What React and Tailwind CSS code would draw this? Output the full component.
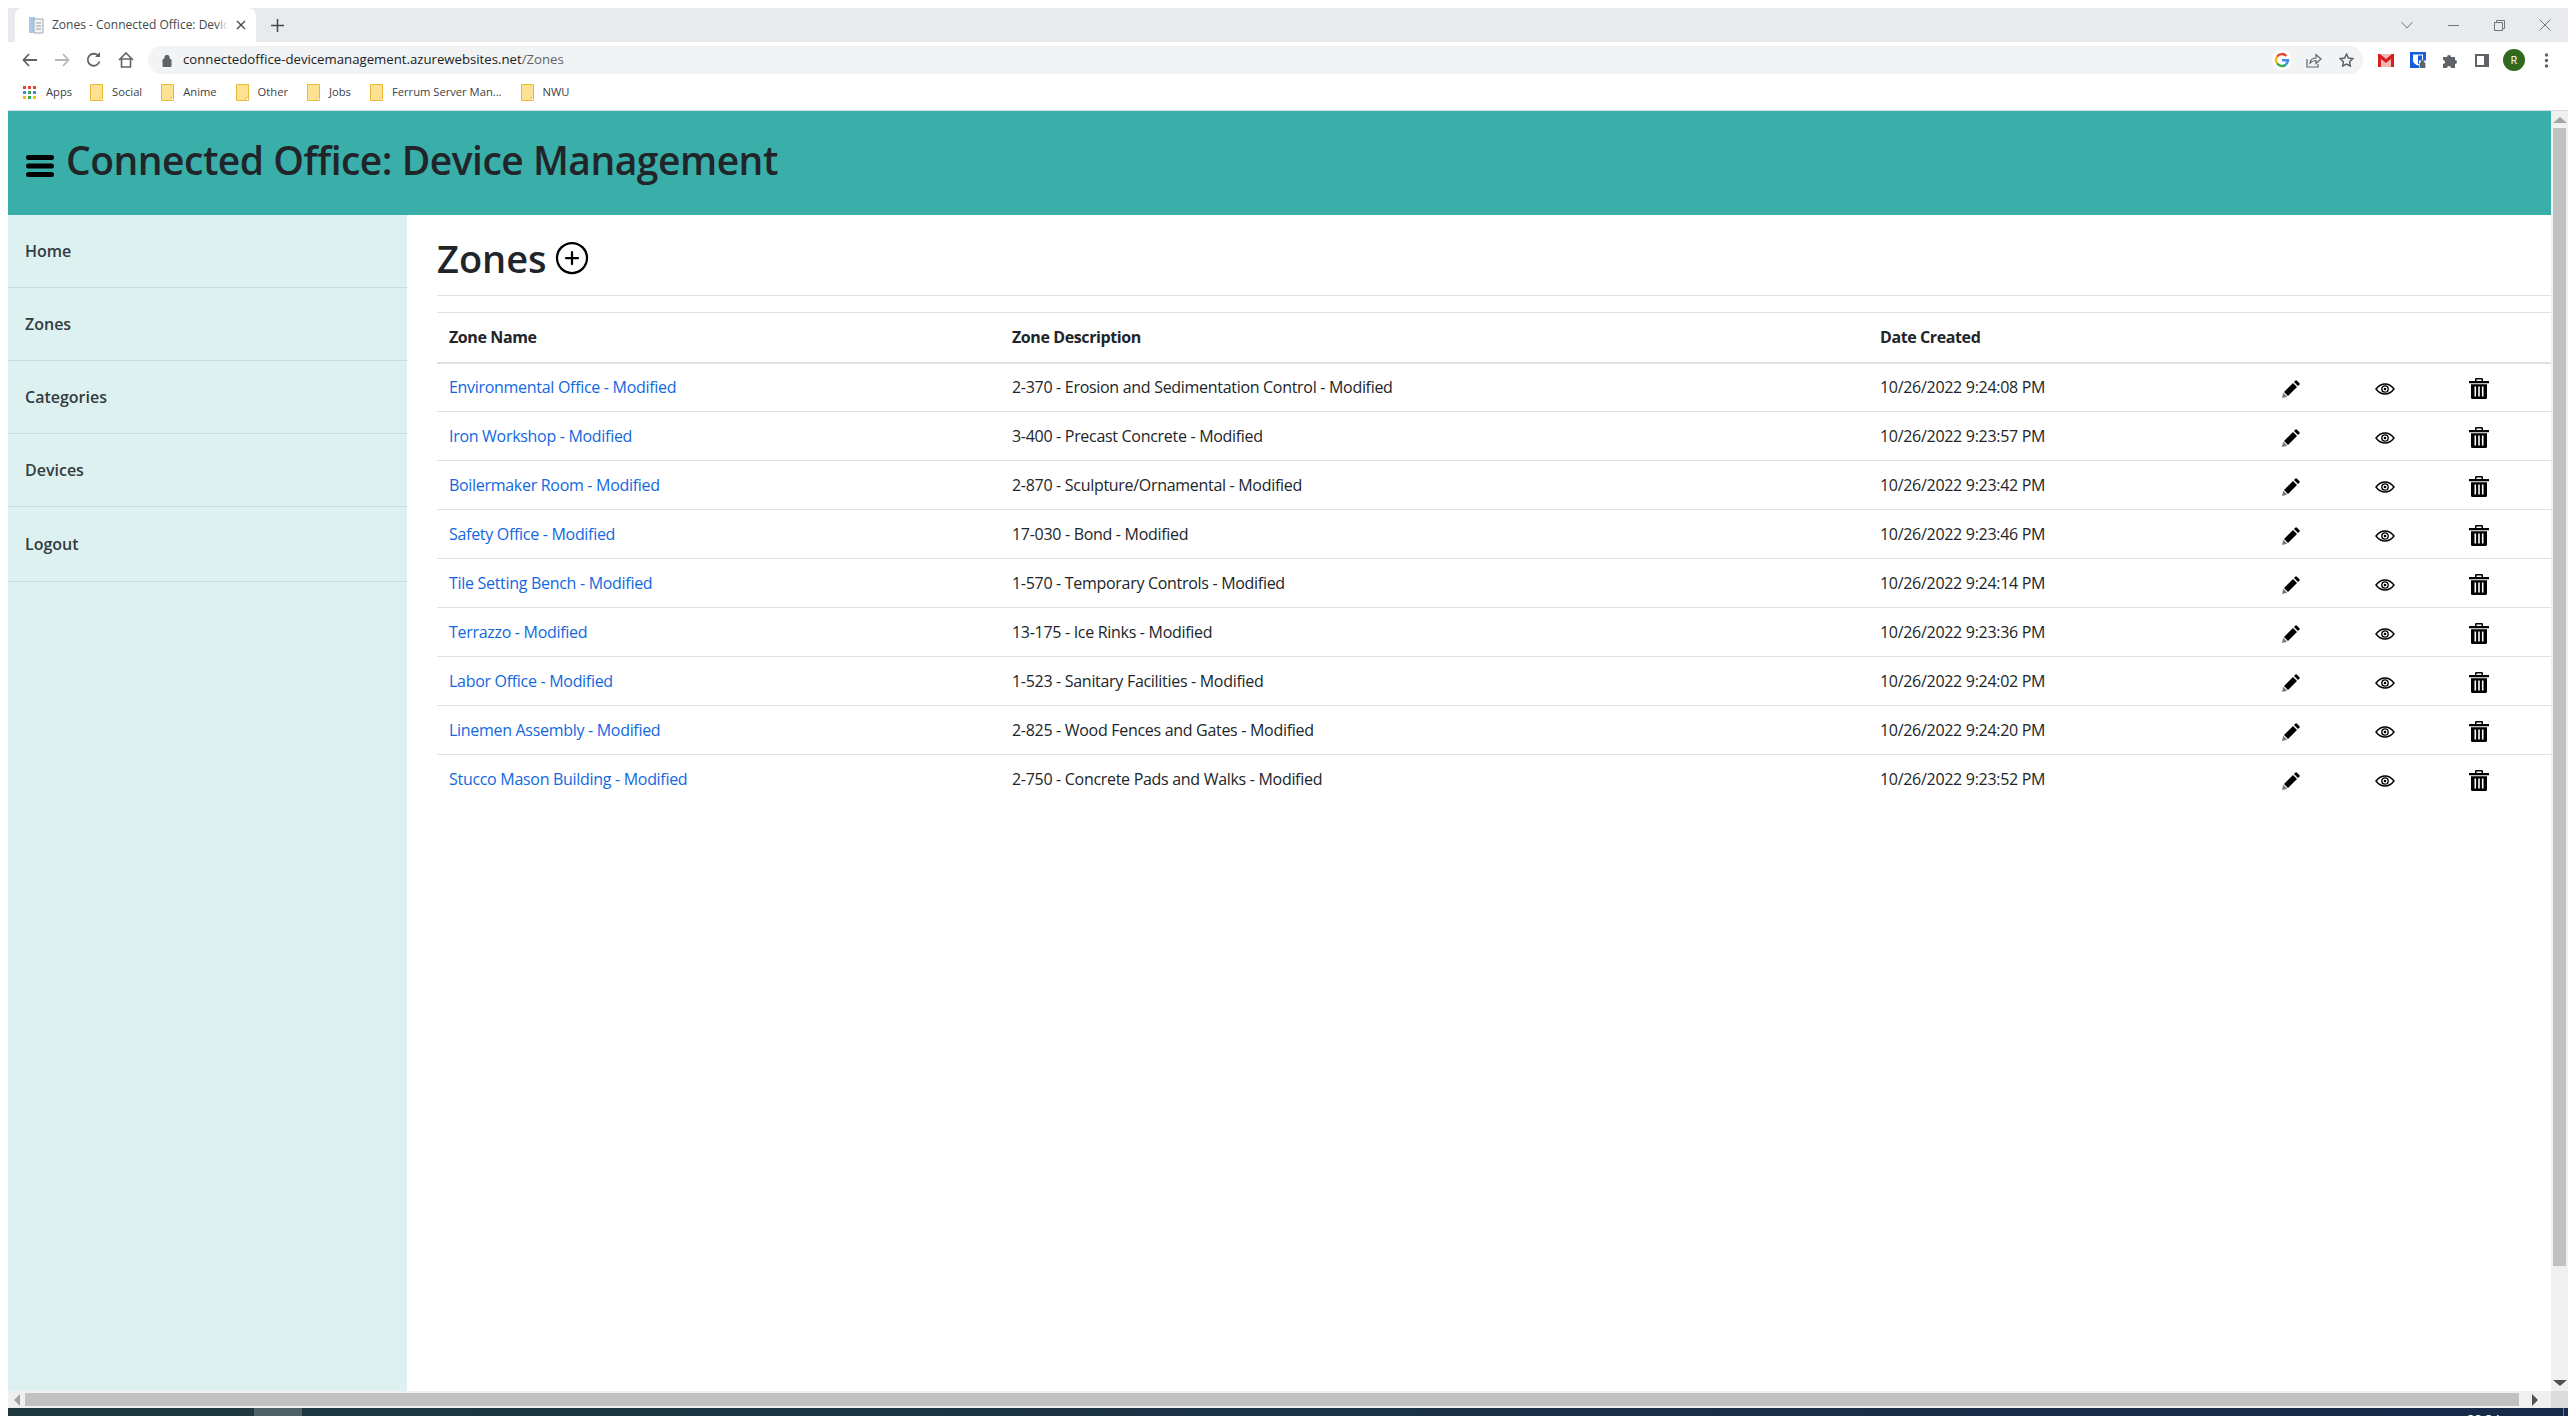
import { FiPlusCircle } from "react-icons/fi";

const zones = [
  ["Environmental Office - Modified", "2-370 - Erosion and Sedimentation Control - Modified", "10/26/2022 9:24:08 PM"],
  ["Iron Workshop - Modified", "3-400 - Precast Concrete - Modified", "10/26/2022 9:23:57 PM"],
  ["Boilermaker Room - Modified", "2-870 - Sculpture/Ornamental - Modified", "10/26/2022 9:23:42 PM"],
  ["Safety Office - Modified", "17-030 - Bond - Modified", "10/26/2022 9:23:46 PM"],
  ["Tile Setting Bench - Modified", "1-570 - Temporary Controls - Modified", "10/26/2022 9:24:14 PM"],
  ["Terrazzo - Modified", "13-175 - Ice Rinks - Modified", "10/26/2022 9:23:36 PM"],
  ["Labor Office - Modified", "1-523 - Sanitary Facilities - Modified", "10/26/2022 9:24:02 PM"],
  ["Linemen Assembly - Modified", "2-825 - Wood Fences and Gates - Modified", "10/26/2022 9:24:20 PM"],
  ["Stucco Mason Building - Modified", "2-750 - Concrete Pads and Walks - Modified", "10/26/2022 9:23:52 PM"],
];

const navItems = ["Home", "Zones", "Categories", "Devices", "Logout"];
const bookmarks = ["Social", "Anime", "Other", "Jobs", "Ferrum Server Man...", "NWU"];

const Folder = () => (
  <svg width="13" height="17" viewBox="0 0 13 17" className="shrink-0">
    <path d="M.5.5h12v16H.5z" fill="#fde293" stroke="#eab93a" />
    <path d="M10 13.500h2.500v3H10z" fill="#fff" stroke="#eab93a" strokeWidth=".8" />
  </svg>
);

const PencilIcon = () => (
  <svg width="18" height="18" viewBox="0 0 18 18">
    <path d="M0 18l1.200-5.200 4 4z" fill="#777" />
    <path d="M2 12l9-9 4 4-9 9z" fill="#000" />
    <path d="M12 2l1.500-1.500q.6-.5 1.200 0l2.800 2.800q.5.7 0 1.200L16 6z" fill="#000" />
  </svg>
);

const EyeIcon = () => (
  <svg width="20" height="12" viewBox="0 0 20 12" fill="none" stroke="#000">
    <path d="M1 6c2.500-3.300 5.500-5 9-5s6.500 1.700 9 5c-2.500 3.300-5.500 5-9 5s-6.500-1.700-9-5z" strokeWidth="1.400" />
    <circle cx="10" cy="6" r="3.200" strokeWidth="1.300" />
    <circle cx="10" cy="6" r="1.300" fill="#000" stroke="none" />
  </svg>
);

const TrashIcon = () => (
  <svg width="20" height="21" viewBox="0 0 20 21">
    <path d="M6 3V1.200Q6 0 7.200 0h5.600Q14 0 14 1.200V3h6v2.200H0V3zM7.500 3h5V1.500h-5z" fill="#000" fillRule="evenodd" />
    <path d="M2 6.200h16V19.500Q18 21 16.500 21h-13Q2 21 2 19.500z" fill="#000" />
    <path d="M5.500 8.500h1.600v10H5.500zM9.200 8.500h1.600v10H9.200zM12.900 8.500h1.600v10h-1.600z" fill="#fff" />
  </svg>
);

const GoogleIcon = () => (
  <svg width="20" height="20" viewBox="0 0 20 20" fill="none" strokeWidth="2.400">
    <circle cx="10" cy="10" r="10" fill="#fff" />
    <path d="M14.400 6A6 6 0 0 0 5.100 6.600" stroke="#ea4335" />
    <path d="M5.100 6.600a6 6 0 0 0 0 6.800" stroke="#fbbc04" />
    <path d="M5.100 13.400a6 6 0 0 0 8.600 1.300" stroke="#34a853" />
    <path d="M13.700 14.700A6 6 0 0 0 16 10.200H10" stroke="#4285f4" />
  </svg>
);

const ToolCell = ({ children }) => (
  <div className="w-[32px] shrink-0 flex items-center justify-center">{children}</div>
);

const ChromeBar = () => (
  <div className="shrink-0 text-[#3c4043] font-['Open_Sans',sans-serif]">
    {/* tab strip */}
    <div className="h-[34px] bg-[#e8eaed] flex items-end pl-[7px]">
      <div className="w-[241px] h-[34px] bg-white rounded-t-[8px] flex items-center pl-[13px] pr-[10px] gap-[8px]">
        <svg width="16" height="18" viewBox="0 0 16 18" className="shrink-0">
          <path d="M1 1h6v16H1z" fill="#a9c8e8" />
          <path d="M6 3h9v14H6z" fill="#f1f3f4" stroke="#a0a8b0" />
          <path d="M8 7h5M8 10h5M8 13h5" stroke="#9aa0a6" />
        </svg>
        <div className="relative flex-1 overflow-hidden">
          <div className="text-[12px] whitespace-nowrap text-[#45484c]">Zones - Connected Office: Device</div>
          <div className="absolute inset-y-0 right-0 w-[12px] bg-gradient-to-r from-transparent to-white" />
        </div>
        <svg width="10" height="10" viewBox="0 0 10 10" stroke="#45484c" strokeWidth="1.400" className="shrink-0"><path d="M1 1l8 8M9 1l-8 8" /></svg>
      </div>
      <div className="h-[34px] flex items-center pl-[15px]">
        <svg width="13" height="13" viewBox="0 0 13 13" stroke="#45484c" strokeWidth="1.500"><path d="M6.500 0v13M0 6.500h13" /></svg>
      </div>
      <div className="ml-auto h-[34px] flex items-center text-[#70757a]">
        <div className="w-[46px] flex justify-center">
          <svg width="12" height="8" viewBox="0 0 12 8" fill="none" stroke="currentColor"><path d="M.5 1l5.500 6 5.500-6" /></svg>
        </div>
        <div className="w-[46px] flex justify-center">
          <div className="w-[11px] h-px bg-current" />
        </div>
        <div className="w-[46px] flex justify-center">
          <svg width="11" height="11" viewBox="0 0 11 11" fill="none" stroke="currentColor"><path d="M.5 2.500h8v8h-8zM2.500 2.500v-2h8v8h-2" /></svg>
        </div>
        <div className="w-[46px] flex justify-center">
          <svg width="12" height="12" viewBox="0 0 12 12" stroke="currentColor"><path d="M.5.500l11 11M11.500.500l-11 11" /></svg>
        </div>
      </div>
    </div>
    {/* address row */}
    <div className="h-[36px] bg-white flex items-center pl-[14px]">
      <div className="flex items-center gap-[16px] w-[126px] shrink-0 text-[#5f6368]">
        <svg width="16" height="14" viewBox="0 0 16 14" fill="none" stroke="currentColor" strokeWidth="1.800"><path d="M15 7H2M7 1L1.500 7 7 13" /></svg>
        <svg width="16" height="14" viewBox="0 0 16 14" fill="none" stroke="#b4b7bb" strokeWidth="1.800"><path d="M1 7h13M9 1l5.500 6L9 13" /></svg>
        <svg width="16" height="16" viewBox="0 0 16 16" fill="none" stroke="currentColor" strokeWidth="1.800"><path d="M13.500 9.500A6 6 0 1 1 12 3.500" /><path d="M14 0v5H9z" fill="currentColor" stroke="none" /></svg>
        <svg width="16" height="16" viewBox="0 0 16 16" fill="none" stroke="currentColor" strokeWidth="1.600"><path d="M1 8l7-7 7 7M3.500 7v8h9V7z" /></svg>
      </div>
      <div className="w-[2215px] shrink-0 h-[28px] rounded-full bg-[#f1f3f4] flex items-center pl-[14px]">
        <svg width="10" height="13" viewBox="0 0 10 13" className="mr-[11px]"><path d="M1 5.500h8v7H1zM2.800 5.500V3.500a2.200 2.200 0 0 1 4.400 0v2" fill="#5f6368" stroke="#5f6368" /></svg>
        <span className="text-[13.200px] text-[#202124]">connectedoffice-devicemanagement.azurewebsites.net<span className="text-[#5f6368]">/Zones</span></span>
        <div className="ml-auto flex items-center pr-[1px]">
          <ToolCell><GoogleIcon /></ToolCell>
          <ToolCell>
            <svg width="16" height="15" viewBox="0 0 16 15" fill="none" stroke="#5f6368" strokeWidth="1.200"><path d="M1 6v8h11V11M4 10c.5-3.500 3-5 6-5V1.500l5 4.500-5 4.500V7.500C7.500 7.500 5.500 8.500 4 10z" /></svg>
          </ToolCell>
          <ToolCell>
            <svg width="15" height="14" viewBox="0 0 15 14" fill="none" stroke="#5f6368" strokeWidth="1.500"><path d="M7.500 1.200l1.900 3.900 4.300.6-3.100 3 .7 4.300-3.800-2-3.800 2 .7-4.300-3.100-3 4.300-.6z" /></svg>
          </ToolCell>
        </div>
      </div>
      <div className="flex items-center ml-[7px]">
        <ToolCell>
          <svg width="16" height="13" viewBox="0 0 16 13"><path d="M0 0h16v13H0z" fill="#f2b8b5" /><path d="M0 0v13h3V5l5 4 5-4v8h3V0h-2L8 5 2 0z" fill="#d81e1e" /></svg>
        </ToolCell>
        <ToolCell>
          <svg width="16" height="16" viewBox="0 0 16 16"><path d="M0 0h16v16H0z" fill="#175ddc" /><path d="M3 2.500h10v6c0 2.500-2.500 4-5 5-2.500-1-5-2.500-5-5z" fill="#fff" /><path d="M8 3.500h4v5c0 1.500-2 2.800-4 3.700z" fill="#175ddc" /><path d="M9 8.500h7v7.500H9z" fill="#fff" /><path d="M10 11h5v5h-5zM11 11V9.800a1.500 1.500 0 0 1 3 0V11" fill="#5f6368" stroke="#5f6368" strokeWidth=".7" /></svg>
        </ToolCell>
        <ToolCell>
          <svg width="15" height="15" viewBox="0 0 15 15"><path d="M0 4h4a2 2 0 0 1 4 0h4v3a2 2 0 0 1 0 4v4H8a2 2 0 0 0-4 0H0v-4a2 2 0 0 0 0-4z" fill="#5f6368" /></svg>
        </ToolCell>
        <ToolCell>
          <svg width="14" height="13" viewBox="0 0 14 13"><path d="M0 0h14v13H0z" fill="#5f6368" /><path d="M2 2h7v9H2z" fill="#fff" /></svg>
        </ToolCell>
        <ToolCell>
          <div className="w-[22px] h-[22px] rounded-full bg-[#33691e] text-white text-[11px] flex items-center justify-center">R</div>
        </ToolCell>
        <ToolCell>
          <svg width="5" height="15" viewBox="0 0 5 15" fill="#5f6368"><circle cx="2.500" cy="2" r="1.700" /><circle cx="2.500" cy="7.500" r="1.700" /><circle cx="2.500" cy="13" r="1.700" /></svg>
        </ToolCell>
      </div>
    </div>
    {/* bookmarks */}
    <div className="h-[33px] pb-[4px] bg-white flex items-center pl-[15px] text-[11.200px] border-b border-[#dadce0]">
      <div className="grid grid-cols-3 gap-[2px] w-[13px] h-[13px] mr-[10px]">
        {["#ea4335", "#ea4335", "#ea4335", "#4285f4", "#34a853", "#4285f4", "#fbbc04", "#34a853", "#fbbc04"].map((c, i) => (
          <span key={i} className="w-[3px] h-[3px]" style={{ backgroundColor: c }} />
        ))}
      </div>
      <span className="mr-[18px]">Apps</span>
      {bookmarks.map((b) => (
        <div key={b} className="flex items-center gap-[9px] mr-[19px]">
          <Folder />
          <span>{b}</span>
        </div>
      ))}
    </div>
  </div>
);

const App = () => {
  return (
    <div className="h-[1416px] w-[2576px] overflow-hidden bg-white flex flex-col font-['Open_Sans',sans-serif] text-[#212529]">
      <div className="h-[8px] shrink-0" />
      <div className="flex-1 min-h-0 flex flex-col pl-[8px] pr-[8px]">
        <ChromeBar />
        <div className="flex-1 min-h-0 flex flex-col">
          <div className="flex-1 min-h-0 flex">
            <div className="flex-1 min-w-0 flex flex-col">
              {/* header */}
              <header className="h-[104px] shrink-0 bg-[#3aaea8] flex items-center pl-[18px]">
                <svg width="28" height="22" viewBox="0 0 28 22" fill="#000" className="mr-[12px] mt-[6px] shrink-0">
                  <rect x="0" y="0" width="28" height="5" rx="2.500" />
                  <rect x="0" y="8.500" width="28" height="5" rx="2.500" />
                  <rect x="0" y="17" width="28" height="5" rx="2.500" />
                </svg>
                <h1 className="text-[39px] leading-[48px] font-semibold tracking-[-0.5px] -mt-[6px]">Connected Office: Device Management</h1>
              </header>
              <div className="flex-1 min-h-0 flex">
                {/* sidebar */}
                <nav className="w-[399px] shrink-0 bg-[#ddf2f0]">
                  {navItems.map((item) => (
                    <div key={item} className={`${item === "Logout" ? "h-[75px]" : "h-[73px]"} flex items-center pl-[17px] border-b border-[#c5dcdc] text-[16px] font-semibold text-[#343a40]`}>
                      {item}
                    </div>
                  ))}
                </nav>
                {/* main */}
                <main className="flex-1 min-w-0 pl-[30px] bg-white">
                  <div className="h-[81px] pt-[5px] flex items-center border-b border-[#dee2e6]">
                    <h2 className="text-[38px] leading-[48px] font-semibold">Zones</h2>
                    <FiPlusCircle className="ml-[7px] mt-[1px] text-black" size={36} strokeWidth={1.500} />
                  </div>
                  <table className="mt-[16px] w-[2114px] table-fixed border-t border-[#dee2e6] text-[16px] tracking-[-0.3px]">
                    <colgroup>
                      <col className="w-[563px]" />
                      <col className="w-[868px]" />
                      <col className="w-[376px]" />
                      <col className="w-[94px]" />
                      <col className="w-[94px]" />
                      <col className="w-[119px]" />
                    </colgroup>
                    <thead>
                      <tr className="h-[50px] border-b-2 border-[#dee2e6] text-left tracking-[-0.4px]">
                        <th className="pl-[12px] font-bold">Zone Name</th>
                        <th className="pl-[12px] font-bold">Zone Description</th>
                        <th className="pl-[12px] font-bold">Date Created</th>
                        <th />
                        <th />
                        <th />
                      </tr>
                    </thead>
                    <tbody>
                      {zones.map(([name, desc, date], i) => (
                        <tr key={name} className={`h-[49px] ${i < zones.length - 1 ? "border-b border-[#dee2e6]" : ""}`}>
                          <td className="pl-[12px] text-[#1268e0] whitespace-nowrap">{name}</td>
                          <td className="pl-[12px] whitespace-nowrap">{desc}</td>
                          <td className="pl-[12px] whitespace-nowrap">{date}</td>
                          <td>
                            <div className="flex justify-center pt-[3px]"><PencilIcon /></div>
                          </td>
                          <td>
                            <div className="flex justify-center pt-[3px]"><EyeIcon /></div>
                          </td>
                          <td className="pl-[37px]">
                            <div className="pt-[3px]"><TrashIcon /></div>
                          </td>
                        </tr>
                      ))}
                    </tbody>
                  </table>
                </main>
              </div>
            </div>
            {/* vertical scrollbar */}
            <div className="w-[17px] shrink-0 bg-[#f0f0f0] flex flex-col items-center">
              <div className="h-[17px] flex items-center justify-center">
                <div className="w-0 h-0 border-x-[7px] border-x-transparent border-b-[6px] border-b-[#a3a3a3]" />
              </div>
              <div className="w-[13px] h-[1138px] bg-[#c1c1c1]" />
              <div className="mt-auto h-[17px] flex items-center justify-center">
                <div className="w-0 h-0 border-x-[7px] border-x-transparent border-t-[6px] border-t-[#505050]" />
              </div>
            </div>
          </div>
          {/* horizontal scrollbar */}
          <div className="h-[17px] shrink-0 bg-[#f0f0f0] flex items-center">
            <div className="w-[17px] flex items-center justify-center">
              <div className="w-0 h-0 border-y-[6px] border-y-transparent border-r-[6px] border-r-[#a3a3a3]" />
            </div>
            <div className="w-[2494px] h-[13px] bg-[#c1c1c1]" />
            <div className="flex-1 flex items-center justify-center pr-[1px]">
              <div className="w-0 h-0 border-y-[6px] border-y-transparent border-l-[6px] border-l-[#505050]" />
            </div>
            <div className="w-[17px] h-[17px] bg-[#dcdcdc]" />
          </div>
        </div>
        {/* taskbar sliver, only the top of the clock shows */}
        <div className="h-[8px] shrink-0 bg-gradient-to-r from-[#20393f] to-[#17294a] flex overflow-hidden relative">
          <div className="ml-[246px] w-[48px] bg-[#4f6268]" />
          <span className="absolute left-[2459px] top-[3px] text-[13px] leading-[16px] text-white">22:34</span>
          <div className="absolute left-[2555px] top-0 w-px h-full bg-[#6b7a8c]" />
        </div>
      </div>
    </div>
  );
};

export default App;
